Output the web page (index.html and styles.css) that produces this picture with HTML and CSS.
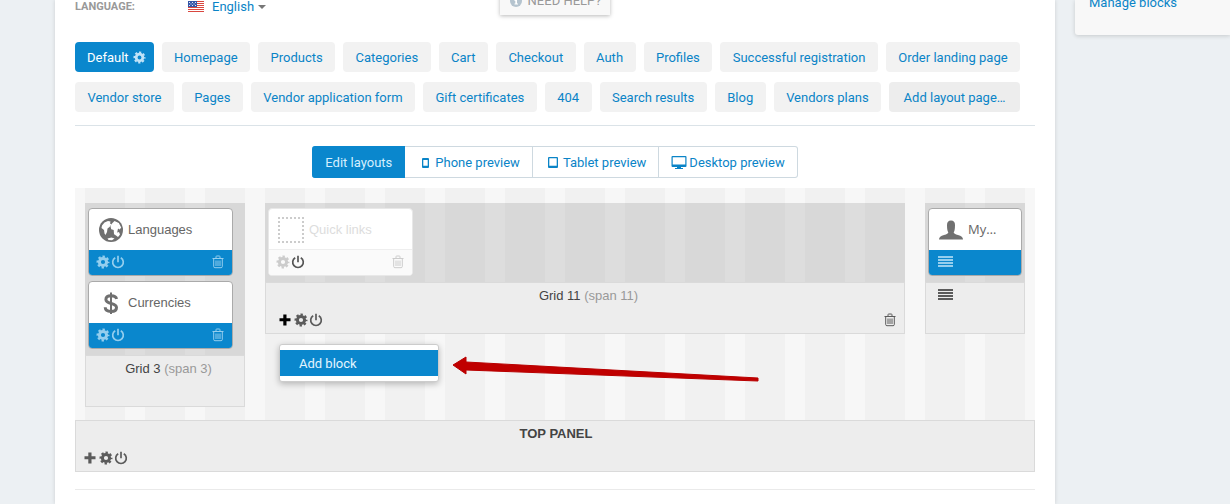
FILE: index.html
```html
<!DOCTYPE html>
<html lang="en">
<head>
<meta charset="utf-8">
<title>Layouts</title>
<link rel="stylesheet" href="styles.css">
</head>
<body>
<svg class="sprite" aria-hidden="true">
  <symbol id="gear" viewBox="0 0 14 14"><g fill="none" stroke="currentColor"><circle cx="7" cy="7" r="3.600" stroke-width="3"/><circle cx="7" cy="7" r="5.500" stroke-width="2" stroke-dasharray="2.400 1.920" stroke-dashoffset="1.200"/></g></symbol>
  <symbol id="power" viewBox="0 0 14 14"><path d="M4.200 2.700a5.300 5.300 0 1 0 5.600 0M7 .7v6.500" fill="none" stroke="currentColor" stroke-width="1.700"/></symbol>
  <symbol id="trash" viewBox="0 0 12 14"><path d="M.5 3.500h11M4 3V1.700Q4 1 4.700 1h2.600q.7 0 .7.7V3M1.700 3.500v8q0 1.200 1.200 1.200h6.200q1.200 0 1.200-1.200v-8M4 5.500V11M6 5.500V11M8 5.500V11" fill="none" stroke="currentColor"/></symbol>
  <symbol id="plus" viewBox="0 0 12 12"><path d="M4.300.5h3.200v3.800h4v3h-4v4.200H4.300V7.300H.5v-3h3.800z"/></symbol>
  <symbol id="lines" viewBox="0 0 15 12"><path d="M0 0h15v2H0zM0 3h15v2H0zM0 6h15v2H0zM0 9h15v2H0z"/></symbol>
</svg>
<div class="page">
  <main class="panel">
    <header class="topbar">
      <div class="language">
        <span class="language-label">Language:</span>
        <button class="language-pick" type="button">
          <svg class="flag" viewBox="0 0 16 11"><path fill="#fff" d="M0 0h16v11H0z"/><path fill="#d9473f" d="M0 0h16v1H0zM0 2h16v1H0zM0 4h16v1H0zM0 6h16v1H0zM0 8h16v1H0zM0 10h16v1H0z"/><path fill="#3457a8" d="M0 0h9v6H0z"/><path fill="#dfe6f5" d="M1 1h1v1H1zM4 1h1v1H4zM7 1h1v1H7zM2.500 2.500h1v1h-1zM5.500 2.500h1v1h-1zM1 4h1v1H1zM4 4h1v1H4zM7 4h1v1H7z"/></svg>
          English<span class="caret"></span>
        </button>
      </div>
      <button class="help" type="button">
        <svg class="help-icon" viewBox="0 0 12 12"><circle cx="6" cy="6" r="6" fill="#b5c4cf"/><path fill="#fff" d="M5 2h2v2H5zM4.500 5H7v3.500h1v1H4.500v-1h.8V6h-.8z"/></svg>
        NEED HELP?
      </button>
    </header>

    <nav class="tabs">
      <a class="tab tab-active" href="#default">Default <svg class="tab-gear"><use href="#gear"/></svg></a>
      <a class="tab" href="#home">Homepage</a>
      <a class="tab" href="#products">Products</a>
      <a class="tab" href="#categories">Categories</a>
      <a class="tab" href="#cart">Cart</a>
      <a class="tab" href="#checkout">Checkout</a>
      <a class="tab" href="#auth">Auth</a>
      <a class="tab" href="#profiles">Profiles</a>
      <a class="tab" href="#success">Successful registration</a>
      <a class="tab" href="#order">Order landing page</a>
      <a class="tab" href="#vendor">Vendor store</a>
      <a class="tab" href="#pages">Pages</a>
      <a class="tab" href="#application">Vendor application form</a>
      <a class="tab" href="#gift">Gift certificates</a>
      <a class="tab" href="#404">404</a>
      <a class="tab" href="#search">Search results</a>
      <a class="tab" href="#blog">Blog</a>
      <a class="tab" href="#plans">Vendors plans</a>
      <a class="tab tab-add" href="#add">Add layout page…</a>
    </nav>

    <div class="modes">
      <button class="mode mode-active" type="button">Edit layouts</button>
      <button class="mode" type="button"><svg class="mode-icon" viewBox="0 0 16 16"><path fill-rule="evenodd" d="M6 3h5q1 0 1 1v8q0 1-1 1H6q-1 0-1-1V4q0-1 1-1zm.300 2v5.700h4.400V5z"/></svg>Phone preview</button>
      <button class="mode" type="button"><svg class="mode-icon" viewBox="0 0 16 16"><path fill-rule="evenodd" d="M4 2h8q1 0 1 1v9q0 1-1 1H4q-1 0-1-1V3q0-1 1-1zm.300 1.200v7.600h7.400V3.200z"/></svg>Tablet preview</button>
      <button class="mode" type="button"><svg class="mode-icon" viewBox="0 0 16 16"><path fill-rule="evenodd" d="M1.500 1h13q1 0 1 1v9q0 1-1 1H10v1h2v1H4v-1h2v-1H1.500q-1 0-1-1V2q0-1 1-1zm.2 1.200v7.300h12.600V2.200z"/></svg>Desktop preview</button>
    </div>

    <section class="container">
      <div class="canvas">
        <div class="grid">
          <div class="slots">
            <article class="block">
              <div class="block-head">
                <svg class="block-icon" viewBox="0 0 24 24"><circle cx="12" cy="12" r="12"/><path fill="#fff" d="M3 7.500 5.500 4.500 9 3l2.500.5-.5 2 1.500.8L10.500 9l-2 1.500L8 14l-1.500 3-1-1.500L5 12l-2.500-2zM13 5.500 15.500 3l4.300 2 2.400 4.500-1.500 2-1.700-1-.8 4-1.700 3-1.500-1.500-.3-4-2.500-.7-.7-3zM17 15l3-1 1 2.500-2 2.500-2-1.500zM8.500 20.500l4-1 3 1-2.500 1.800-3.500-.3z"/></svg>
                <span>Languages</span>
              </div>
              <div class="block-bar">
                <button class="icon-btn" type="button" aria-label="Settings"><svg class="icon"><use href="#gear"/></svg></button>
                <button class="icon-btn" type="button" aria-label="Toggle"><svg class="icon"><use href="#power"/></svg></button>
                <button class="icon-btn push" type="button" aria-label="Delete"><svg class="icon icon-trash"><use href="#trash"/></svg></button>
              </div>
            </article>
            <article class="block">
              <div class="block-head">
                <svg class="block-icon" viewBox="0 0 24 24"><path d="M17.500 8C17.200 5.700 15.300 4.700 12 4.700S6.900 6.200 6.900 8.500c0 5.200 10.600 2.700 10.600 8 0 2.500-2 4-5.500 4s-5.700-1.500-5.800-4.200" fill="none" stroke="currentColor" stroke-width="3"/><path d="M12 1.500v21.500" stroke="currentColor" stroke-width="2"/></svg>
                <span>Currencies</span>
              </div>
              <div class="block-bar">
                <button class="icon-btn" type="button" aria-label="Settings"><svg class="icon"><use href="#gear"/></svg></button>
                <button class="icon-btn" type="button" aria-label="Toggle"><svg class="icon"><use href="#power"/></svg></button>
                <button class="icon-btn push" type="button" aria-label="Delete"><svg class="icon icon-trash"><use href="#trash"/></svg></button>
              </div>
            </article>
          </div>
          <footer class="grid-foot"><p class="grid-title">Grid 3 <span class="span">(span 3)</span></p></footer>
        </div>

        <div class="grid">
          <div class="slots">
            <article class="block block-off">
              <div class="block-head">
                <span class="placeholder"></span>
                <span>Quick links</span>
              </div>
              <div class="block-bar">
                <button class="icon-btn" type="button" aria-label="Settings"><svg class="icon"><use href="#gear"/></svg></button>
                <button class="icon-btn dark" type="button" aria-label="Toggle"><svg class="icon"><use href="#power"/></svg></button>
                <button class="icon-btn push" type="button" aria-label="Delete"><svg class="icon icon-trash"><use href="#trash"/></svg></button>
              </div>
            </article>
          </div>
          <footer class="grid-foot">
            <p class="grid-title">Grid 11 <span class="span">(span 11)</span></p>
            <div class="grid-tools grid-tools-inset">
              <button class="icon-btn black" type="button" aria-label="Add"><svg class="icon icon-plus"><use href="#plus"/></svg></button>
              <button class="icon-btn" type="button" aria-label="Settings"><svg class="icon"><use href="#gear"/></svg></button>
              <button class="icon-btn" type="button" aria-label="Toggle"><svg class="icon"><use href="#power"/></svg></button>
              <button class="icon-btn push" type="button" aria-label="Delete"><svg class="icon icon-trash"><use href="#trash"/></svg></button>
            </div>
          </footer>
          <div class="menu"><a class="menu-item" href="#add-block">Add block</a></div>
          <svg class="arrow" viewBox="0 0 308 26"><path fill="#c00000" stroke="#b80000" stroke-linejoin="round" d="M1 9 14 1v5L306 22v3L14 14v4z"/></svg>
        </div>

        <div class="grid">
          <div class="slots">
            <article class="block block-wide">
              <div class="block-head">
                <svg class="block-icon" viewBox="0 0 24 24"><path d="M0 21.500q0-3.500 5-4.500 4.300-1 4.300-2.700Q8 12.500 8 7q0-4.500 4-4.500T16 7q0 5.500-1.300 7.300 0 1.700 4.300 2.700 5 1 5 4.500z"/></svg>
                <span class="block-name-alt">My…</span>
              </div>
              <div class="block-bar bar-inset"><button class="icon-btn" type="button" aria-label="Actions"><svg class="icon icon-lines"><use href="#lines"/></svg></button></div>
            </article>
          </div>
          <footer class="grid-foot"><div class="foot-actions"><button class="icon-btn" type="button" aria-label="Actions"><svg class="icon icon-lines"><use href="#lines"/></svg></button></div></footer>
        </div>
      </div>
      <footer class="grid-foot container-foot">
        <p class="grid-title container-title">TOP PANEL</p>
        <div class="grid-tools">
          <button class="icon-btn" type="button" aria-label="Add"><svg class="icon icon-plus"><use href="#plus"/></svg></button>
          <button class="icon-btn" type="button" aria-label="Settings"><svg class="icon"><use href="#gear"/></svg></button>
          <button class="icon-btn" type="button" aria-label="Toggle"><svg class="icon"><use href="#power"/></svg></button>
        </div>
      </footer>
    </section>
    <hr class="divider">
  </main>
  <aside class="sidebar"><a class="side-link" href="#blocks">Manage blocks</a></aside>
</div>
</body>
</html>
```
FILE: styles.css
```css
* { box-sizing: border-box; }
body {
  margin: 0;
  background: #ecf0f3;
  font: 13px/20px Roboto, sans-serif;
  color: #444;
  overflow: hidden;
}
a { color: #0a84c7; text-decoration: none; }
button { font: inherit; color: inherit; background: none; border: 0; padding: 0; margin: 0; }
svg { fill: currentColor; display: block; }
.sprite { position: absolute; width: 0; height: 0; }

.page { display: flex; gap: 20px; align-items: flex-start; padding-left: 55px; }
.panel {
  flex: 1;
  min-height: 100vh;
  padding: 0 20px;
  background: #fff;
  box-shadow: 0 0 4px rgba(0, 0, 0, .14);
}
.sidebar {
  flex: 0 0 155px;
  height: 35px;
  padding-left: 14px;
  background: #f8f8f8;
  border-radius: 0 0 0 3px;
  box-shadow: 0 1px 4px rgba(0, 0, 0, .16);
}
.side-link { display: block; margin-top: -7px; }

.topbar { display: grid; grid-template-columns: 1fr auto 1fr; align-items: start; height: 42px; }
.language { display: flex; margin-top: -3px; }
.language-label { width: 113px; font-size: 11px; font-weight: 700; color: #999; text-transform: uppercase; }
.language-pick { display: flex; align-items: center; color: #0a84c7; }
.flag { width: 16px; height: 11px; margin: 0 8px 2px 0; }
.caret { margin-left: 4px; border: 4px solid transparent; border-top-color: #777; border-bottom: 0; }
.help {
  display: flex;
  align-items: center;
  gap: 6px;
  margin-top: -15px;
  height: 30px;
  padding: 2px 9px 0 10px;
  background: #f8f8f8;
  color: #999;
  box-shadow: 0 1px 4px rgba(0, 0, 0, .28);
}
.help-icon { width: 12px; height: 12px; }

.tabs {
  display: flex;
  flex-wrap: wrap;
  gap: 10px 8px;
  padding: 0 15px 13px 0;
  position: relative;
  border-bottom: 1px solid #dbe3e8;
}
.tab {
  display: flex;
  flex-grow: 1;
  align-items: center;
  justify-content: center;
  height: 30px;
  padding: 2px 12px 0;
  background: #f2f2f2;
  border-radius: 4px;
}
.tab-active { flex-grow: 0; gap: 4px; padding: 2px 8px 0 12px; background: #0a87cd; color: #fff; }
.tab-add { padding: 2px 14px 0; background: #ededed; }
.tab-gear { width: 13px; height: 13px; margin-bottom: 2px; color: #c0e3f8; }

.modes { display: flex; width: max-content; margin: 20px auto 10px; }
.mode {
  display: flex;
  align-items: center;
  gap: 2px;
  height: 32px;
  padding: 1px 12px 0;
  color: #0a84c7;
  border: 1px solid #ced9e0;
  border-left-width: 0;
}
.mode:last-child { border-radius: 0 3px 3px 0; }
.mode-active { padding: 1px 12px 0 13px; background: #0a87cd; border-color: #0a87cd; color: #d4efff; border-radius: 3px 0 0 3px; }
.mode-icon { width: 16px; height: 16px; }

.canvas {
  display: grid;
  grid-template-columns: 160fr 640fr 100fr;
  gap: 20px;
  align-items: start;
  padding: 15px 10px 13px;
  background: linear-gradient(90deg, #f7f7f7 16.667%, #f1f1f1 16.667% 83.333%, #f7f7f7 83.333%) 0 0 / 6.25% 100%;
  font-family: "Liberation Sans", Arial, sans-serif;
}
.grid { position: relative; min-width: 0; }
.slots { display: grid; justify-items: start; gap: 5px; padding: 5px 3px 6px; background: rgba(0, 0, 0, .1); }
.grid-foot { height: 52px; padding: 3px 5px; background: #ededed; border: 1px solid #dadada; }
.grid-title { margin: 0; padding-left: 7px; text-align: center; }
.span { color: #999; }

.block { width: 145px; max-width: 100%; background: #fff; border: 1px solid #aaa; border-radius: 4px; overflow: hidden; }
.block-wide { width: 100%; }
.block-head { display: flex; align-items: center; gap: 5px; height: 41px; padding-left: 10px; color: #666; }
.block-icon { width: 24px; height: 24px; color: #707070; }
.block-name-alt { padding-bottom: 2px; font-family: "Open Sans", sans-serif; }
.block-bar { display: flex; align-items: center; gap: 1px; height: 25px; padding: 0 8px 2px 7px; background: #0a87cd; color: #94ceee; }
.bar-inset { padding-left: 9px; }
.block-off { border-color: #e8e8e8; }
.block-off .block-head { height: 40px; padding: 1px 0 0 9px; color: #ddd; }
.block-off .block-bar { height: 26px; background: #fafafa; border-top: 1px solid #eee; color: #ccc; }
.placeholder { width: 26px; height: 26px; border: 2px dotted #ccc; }

.icon { width: 14px; height: 14px; }
.icon-trash { width: 12px; }
.icon-plus { width: 12px; height: 12px; }
.icon-lines { width: 15px; height: 12px; }
.push { margin-left: auto; }
.block-bar .icon-btn.dark { color: #555; }
.icon-btn.black { color: #000; }
.grid-tools { display: flex; align-items: center; gap: 1px; height: 28px; padding-left: 3px; color: #5b5b5b; }
.grid-tools-inset { padding: 0 3px 0 8px; }
.grid-tools .icon-plus { margin-right: 2px; }
.foot-actions { padding: 1px 7px; color: #5b5b5b; }

.menu {
  position: absolute;
  top: 141px;
  left: 14px;
  width: 160px;
  padding: 5px 0;
  background: #fff;
  border: 1px solid #ccc;
  border-radius: 3px;
  box-shadow: 0 2px 6px rgba(0, 0, 0, .25);
}
.menu-item { display: block; padding: 4px 20px 2px 19px; background: #0a87cd; color: #e4f5ff; font-family: Roboto, sans-serif; }
.arrow { position: absolute; top: 153px; left: 187px; width: 308px; height: 26px; }

.container-foot { font-family: "Liberation Sans", Arial, sans-serif; }
.container-title { padding-left: 2px; font-weight: 700; }
.divider { margin: 17px 0 0; border: 0; border-top: 1px solid #eaeaea; }
```
